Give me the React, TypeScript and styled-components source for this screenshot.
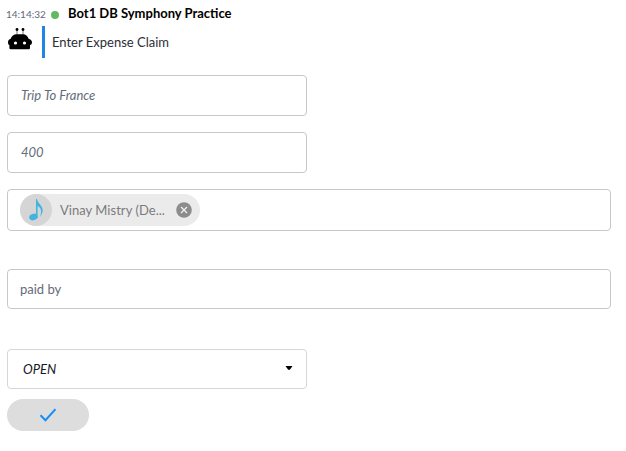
import React from "react";
import styled, { createGlobalStyle } from "styled-components";

const GlobalStyle = createGlobalStyle`
  * { box-sizing: border-box; }
  body { margin: 0; background: #fff; font-family: Lato, sans-serif; }
  button, input { font-family: inherit; }
`;

const Page = styled.main`
  width: 626px;
  height: 451px;
  padding: 6px 15px 0 7px;
  overflow: hidden;
`;

const Header = styled.header`
  display: flex;
  align-items: center;
  height: 16px;
  white-space: nowrap;
`;

const Time = styled.time`
  width: 44px;
  margin-left: -1px;
  font-size: 10px;
  line-height: 14px;
  color: #626876;
`;

const Presence = styled.span`
  width: 8px;
  height: 8px;
  margin: 2px 9px 0 1px;
  border-radius: 50%;
  background: #5fba63;
`;

const Sender = styled.h1`
  margin: -2px 0 0;
  font-size: 13px;
  font-weight: 700;
  line-height: 16px;
  color: #000;
`;

const Message = styled.div`
  display: flex;
  height: 32px;
  margin-top: 4px;
`;

const BotIcon = styled.svg`
  display: block;
  width: 26px;
  height: 24px;
  margin-right: 9px;
`;

const MessageText = styled.p`
  margin: 0;
  padding-left: 7px;
  border-left: 3px solid #1f86e8;
  font-size: 13px;
  line-height: 33px;
  color: #2b2e36;
`;

const Form = styled.form`
  display: flex;
  flex-direction: column;
  align-items: flex-start;
  margin-top: 17px;
`;

const Field = styled.div<{ $width: number; $height: number; $gap: number; $pad?: number; $pale?: boolean }>`
  display: flex;
  align-items: center;
  width: ${(p) => p.$width}px;
  height: ${(p) => p.$height}px;
  margin-bottom: ${(p) => p.$gap}px;
  padding: 0 12px 0 ${(p) => p.$pad ?? 12}px;
  border: 1px solid ${(p) => (p.$pale ? "#d6d6da" : "#c6c7ce")};
  border-radius: 4px;
`;

const Value = styled.span<{ $italic?: boolean; $dark?: boolean; $raised?: boolean }>`
  padding-bottom: ${(p) => (p.$raised ? 1 : 0)}px;
  font-size: 13px;
  line-height: 16px;
  font-style: ${(p) => (p.$italic ? "italic" : "normal")};
  color: ${(p) => (p.$dark ? "#17191e" : "#656b79")};
`;

const Caret = styled.svg`
  width: 8px;
  height: 4px;
  margin: -2px 1px 0 auto;
`;

const Chip = styled.div`
  display: flex;
  align-items: center;
  width: 180px;
  height: 32px;
  border-radius: 16px;
  background: #ebebeb;
`;

const Avatar = styled.span`
  width: 32px;
  height: 32px;
  border-radius: 50%;
  background: #d5d5d5;
`;

const ChipName = styled.span`
  width: 116px;
  padding-left: 8px;
  font-size: 13px;
  line-height: 16px;
  letter-spacing: 0.03px;
  white-space: nowrap;
  color: #7b7b7b;
`;

const Remove = styled.button`
  width: 16px;
  height: 16px;
  margin: 0 0 0 8px;
  padding: 0;
  border: 0;
  background: none;
`;

const Glyph = styled.svg`
  display: block;
`;

const Submit = styled.button`
  display: flex;
  align-items: center;
  justify-content: center;
  width: 82px;
  height: 32px;
  padding: 0;
  border: 0;
  border-radius: 16px;
  background: #ddd;
`;

export default function App() {
  return (
    <>
      <GlobalStyle />
      <Page>
        <Header>
          <Time>14:14:32</Time>
          <Presence />
          <Sender>Bot1 DB Symphony Practice</Sender>
        </Header>
        <Message>
          <BotIcon viewBox="0 0 26 24">
            <path d="M10 4v5M16 4v5" stroke="#666" strokeWidth="0.9" />
            <circle cx="10" cy="3.5" r="1.4" />
            <circle cx="16" cy="3.5" r="1.4" />
            <path d="M3.500 13C4.500 10 7 8.200 9.500 8.200h6.500c2.600 0 4.800 1.800 5.800 4.800 1.500.3 3.200 1.200 3.200 3.300s-1.300 2.700-2 2.800v3c0 .7-.3 1.100-1 1.100H3.400c-.7 0-1-.4-1-1.100v-3C1.500 18.800 1 18 1 16.300 1 14.200 2.200 13.300 3.500 13Z" />
            <circle cx="8.500" cy="17" r="1.600" fill="#fff" />
            <circle cx="17.500" cy="17" r="1.600" fill="#fff" />
          </BotIcon>
          <MessageText>Enter Expense Claim</MessageText>
        </Message>
        <Form>
          <Field $width={300} $height={41} $gap={16} $pad={13}>
            <Value $italic $raised>Trip To France</Value>
          </Field>
          <Field $width={300} $height={41} $gap={16} $pad={13}>
            <Value $italic $raised>400</Value>
          </Field>
          <Field $width={604} $height={42} $gap={38}>
            <Chip>
              <Avatar>
                <Glyph width="32" height="32" viewBox="0 0 32 32" fill="#42b4df">
                  <ellipse cx="13.400" cy="23" rx="4.300" ry="3.200" transform="rotate(-18 13.400 23)" />
                  <path d="M16 5h1c.4 4 5.700 6.500 5.700 11.200 0 2.500-1.300 4.900-2.700 6.500 2.200-5.500.8-9.200-2.400-10.700v11.500H16Z" />
                </Glyph>
              </Avatar>
              <ChipName>Vinay Mistry (De...</ChipName>
              <Remove type="button" aria-label="Remove">
                <Glyph width="16" height="16" viewBox="0 0 16 16">
                  <circle cx="8" cy="8" r="7.800" fill="#8c8c8c" />
                  <path d="m5 5 6 6m0-6-6 6" stroke="#f1f1f1" strokeWidth="1.300" />
                </Glyph>
              </Remove>
            </Chip>
          </Field>
          <Field $width={604} $height={40} $gap={40}>
            <Value>paid by</Value>
          </Field>
          <Field $width={300} $height={40} $gap={10} $pad={15} $pale>
            <Value $italic $dark>OPEN</Value>
            <Caret viewBox="0 0 8 4"><path d="M.5 0h7L5 3.500q-1 .8-2 0Z" /></Caret>
          </Field>
          <Submit type="button" aria-label="Submit">
            <Glyph width="18" height="14" viewBox="0 0 18 14" fill="none">
              <path d="m1.500 7.200 5 5L16.500 1.200" stroke="#168cfa" strokeWidth="2" />
            </Glyph>
          </Submit>
        </Form>
      </Page>
    </>
  );
}
